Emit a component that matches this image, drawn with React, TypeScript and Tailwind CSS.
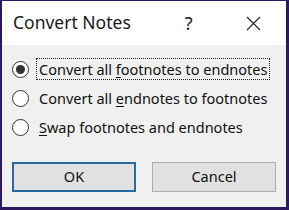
export default function App() {
  const options = [
    { before: 'Convert all ', key: 'f', after: 'ootnotes to endnotes', checked: true },
    { before: 'Convert all ', key: 'e', after: 'ndnotes to footnotes', checked: false },
    { before: '', key: 'S', after: 'wap footnotes and endnotes', checked: false },
  ];

  return (
    <div
      className="w-[289px] h-[210px] bg-[#2c185c] pl-[2px] pr-[3px] pt-[1px] pb-[3px] flex"
      style={{ fontFamily: '"Noto Sans", "Open Sans", Arial, sans-serif' }}
    >
      <div className="flex-1 flex flex-col bg-[#f0f0f0]">
        {/* Title bar */}
        <div className="h-[44px] bg-white flex items-center pl-[11px] text-[#1a1a1a]">
          <span className="text-[17.5px] leading-none">Convert Notes</span>
          <span className="ml-[54px] text-[18px] leading-none">?</span>
          <svg className="ml-[53px]" width="15" height="15" viewBox="0 0 15 15">
            <path d="M1 1 L14 14 M14 1 L1 14" stroke="#222" strokeWidth="1.1" fill="none" />
          </svg>
        </div>

        {/* Options */}
        <div className="flex flex-col pt-[13px] pl-[10px] gap-[7px]">
          {options.map((o, i) => (
            <div key={i} className="flex items-center h-[22px]">
              <span className="w-[17px] h-[17px] rounded-full border border-[#333] bg-white flex items-center justify-center">
                {o.checked && <span className="w-[9px] h-[9px] rounded-full bg-[#333]" />}
              </span>
              <span
                className={
                  'ml-[7px] px-[2px] h-[22px] leading-[20px] text-[14.5px] text-[#111] whitespace-pre ' +
                  (o.checked ? 'border border-dotted border-[#222]' : 'border border-transparent')
                }
              >
                <span>
                  {o.before}
                  <span className="underline underline-offset-2">{o.key}</span>
                  {o.after}
                </span>
              </span>
            </div>
          ))}
        </div>

        {/* Buttons */}
        <div className="mt-auto mb-[15px] flex px-[10px] gap-[16px]">
          <button className="w-[124px] h-[30px] bg-[#e1e1e1] border-2 border-[#2a6aa3] text-[14.5px] text-[#111]">
            OK
          </button>
          <button className="w-[124px] h-[30px] bg-[#e1e1e1] border border-[#adadad] text-[14.5px] text-[#111]">
            Cancel
          </button>
        </div>
      </div>
    </div>
  );
}
